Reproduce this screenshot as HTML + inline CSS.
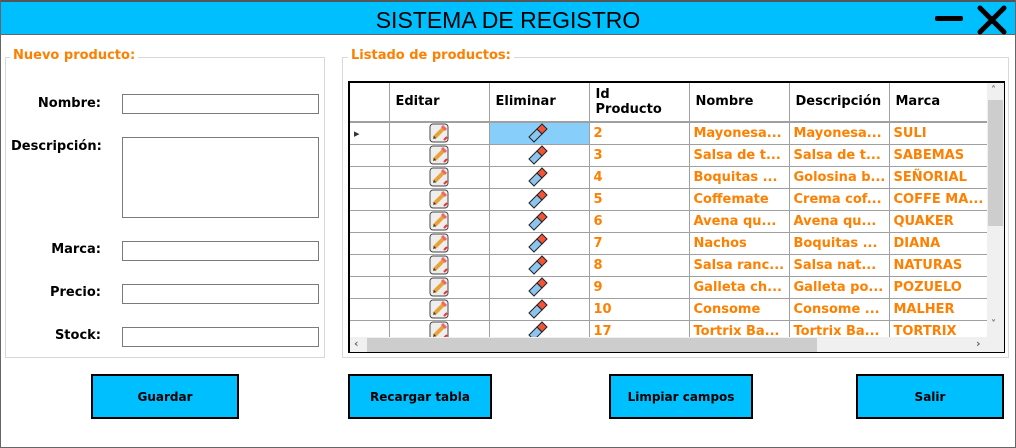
<!DOCTYPE html>
<html><head><meta charset="utf-8"><style>
*{margin:0;padding:0;box-sizing:border-box}
body{width:1016px;height:448px;background:#fff;position:relative;overflow:hidden;font-family:"DejaVu Sans","Liberation Sans",sans-serif;font-weight:bold;font-size:12px}
.a{position:absolute}
.win{left:0;top:0;width:1016px;height:448px;border:1px solid #666;border-top:2px solid #555}
.title{left:1px;top:2px;width:1014px;height:33px;background:#00bfff;border-bottom:1px solid #666}
.title span{position:absolute;left:0;right:0;top:5px;text-align:center;font-family:"Liberation Sans",sans-serif;font-weight:normal;font-size:23px;color:#000}
.grp{border:1px solid #d8d8d8}
.lg{color:#ff8000;font-size:13px;background:#fff;padding:0 3px}
.lbl{font-size:13px;color:#000;text-align:right;width:90px}
.inp{border:1px solid #7a7a7a;background:#fff}
.btn{background:#00bfff;border:2px solid #000;font-size:12px;display:flex;align-items:center;justify-content:center;color:#000}
table{border-collapse:collapse;table-layout:fixed}
td{border:1px solid #a0a0a0;height:22px;padding:0 4px;color:#ff8000;font-size:13px;white-space:nowrap;overflow:hidden}
th{border:1px solid #a0a0a0;border-top:none;height:38px;text-align:left;padding:0 6px;font-size:13px;color:#000;line-height:15px}
td.ic{text-align:center;padding:0}
</style></head><body>
<div class="a win"></div>
<div class="a title"><span>SISTEMA DE REGISTRO</span>
<div class="a" style="left:934px;top:14px;width:28px;height:5px;background:#000;border-radius:2px"></div>
<svg class="a" style="left:975px;top:3px" width="32" height="30"><path d="M4 3L28 27M28 3L4 27" stroke="#000" stroke-width="5" stroke-linecap="round"/></svg>
</div>

<div class="a grp" style="left:5px;top:57px;width:320px;height:301px"></div>
<div class="a lg" style="left:10px;top:48px">Nuevo producto:</div>
<div class="a lbl" style="left:11px;top:96px">Nombre:</div>
<div class="a inp" style="left:122px;top:94px;width:197px;height:20px"></div>
<div class="a lbl" style="left:11px;top:139px">Descripción:</div>
<div class="a inp" style="left:122px;top:137px;width:197px;height:81px"></div>
<div class="a lbl" style="left:11px;top:242px">Marca:</div>
<div class="a inp" style="left:122px;top:241px;width:197px;height:20px"></div>
<div class="a lbl" style="left:11px;top:285px">Precio:</div>
<div class="a inp" style="left:122px;top:284px;width:197px;height:20px"></div>
<div class="a lbl" style="left:11px;top:328px">Stock:</div>
<div class="a inp" style="left:122px;top:327px;width:197px;height:20px"></div>

<div class="a grp" style="left:342px;top:57px;width:667px;height:301px"></div>
<div class="a lg" style="left:348px;top:48px">Listado de productos:</div>

<div class="a" style="left:348px;top:81px;width:657px;height:272px;border:2px solid #000;border-right-width:1px;border-bottom-width:1px;overflow:hidden;background:#fff">
<table style="width:638px">
<colgroup><col style="width:39px"><col style="width:100px"><col style="width:100px"><col style="width:100px"><col style="width:100px"><col style="width:100px"><col style="width:99px"></colgroup>
<tr><th style="border-left:none"></th><th>Editar</th><th>Eliminar</th><th>Id<br>Producto</th><th>Nombre</th><th>Descripción</th><th>Marca</th></tr>
</table>
<div id="rows"></div>
<div class="a" style="left:637px;top:0;width:18px;height:254px;background:#f0f0f0"><div class="a" style="left:1px;top:17px;width:15px;height:126px;background:#cdcdcd"></div><div class="a" style="left:4px;top:2px;font-size:10px;color:#666">˄</div><div class="a" style="left:4px;top:236px;font-size:10px;color:#666">˅</div></div>
<div class="a" style="left:0;top:254px;width:655px;height:16px;background:#f0f0f0"><div class="a" style="left:17px;top:1px;width:450px;height:14px;background:#cdcdcd"></div><div class="a" style="left:4px;top:0;font-size:11px;color:#666">‹</div><div class="a" style="left:626px;top:0;font-size:11px;color:#666">›</div></div>
</div>

<div class="a btn" style="left:91px;top:374px;width:148px;height:45px">Guardar</div>
<div class="a btn" style="left:348px;top:374px;width:144px;height:45px">Recargar tabla</div>
<div class="a btn" style="left:609px;top:374px;width:144px;height:45px">Limpiar campos</div>
<div class="a btn" style="left:856px;top:374px;width:148px;height:45px">Salir</div>

<script>
var d=[["2","Mayonesa...","Mayonesa...","SULI"],["3","Salsa de t...","Salsa de t...","SABEMAS"],["4","Boquitas ...","Golosina b...","SEÑORIAL"],["5","Coffemate","Crema cof...","COFFE MA..."],["6","Avena qu...","Avena qu...","QUAKER"],["7","Nachos","Boquitas ...","DIANA"],["8","Salsa ranc...","Salsa nat...","NATURAS"],["9","Galleta ch...","Galleta po...","POZUELO"],["10","Consome","Consome ...","MALHER"],["17","Tortrix Ba...","Tortrix Ba...","TORTRIX"]];
var pen='<svg width="20" height="20" style="vertical-align:middle"><rect x="1" y="1" width="18" height="18" rx="3" fill="#eee" stroke="#444"/><path d="M5 15L15 5" stroke="#e8a23a" stroke-width="4"/><path d="M13 3L17 7" stroke="#e66" stroke-width="3"/><path d="M4 16l1-3 2 2z" fill="#333"/><path d="M15 17l3-3" stroke="#e33" stroke-width="2"/></svg>';
var er='<svg width="24" height="21" style="vertical-align:middle"><path d="M2 14L10 6 15 11 7 19Z" fill="#8ec5ee" stroke="#222"/><path d="M10 6L15 1 20 6 15 11Z" fill="#f05537" stroke="#222"/></svg>';
var h='<table style="width:638px"><colgroup><col style="width:39px"><col style="width:100px"><col style="width:100px"><col style="width:100px"><col style="width:100px"><col style="width:100px"><col style="width:99px"></colgroup>';
d.forEach(function(r,i){h+='<tr><td style="border-left:none;color:#333;font-size:11px">'+(i==0?'&#9656;':'')+'</td><td class="ic">'+pen+'</td><td class="ic"'+(i==0?' style="background:#87cefa"':'')+'>'+er+'</td><td>'+r[0]+'</td><td>'+r[1]+'</td><td>'+r[2]+'</td><td>'+r[3]+'</td></tr>';});
document.getElementById('rows').innerHTML=h+'</table>';
</script>
</body></html>
